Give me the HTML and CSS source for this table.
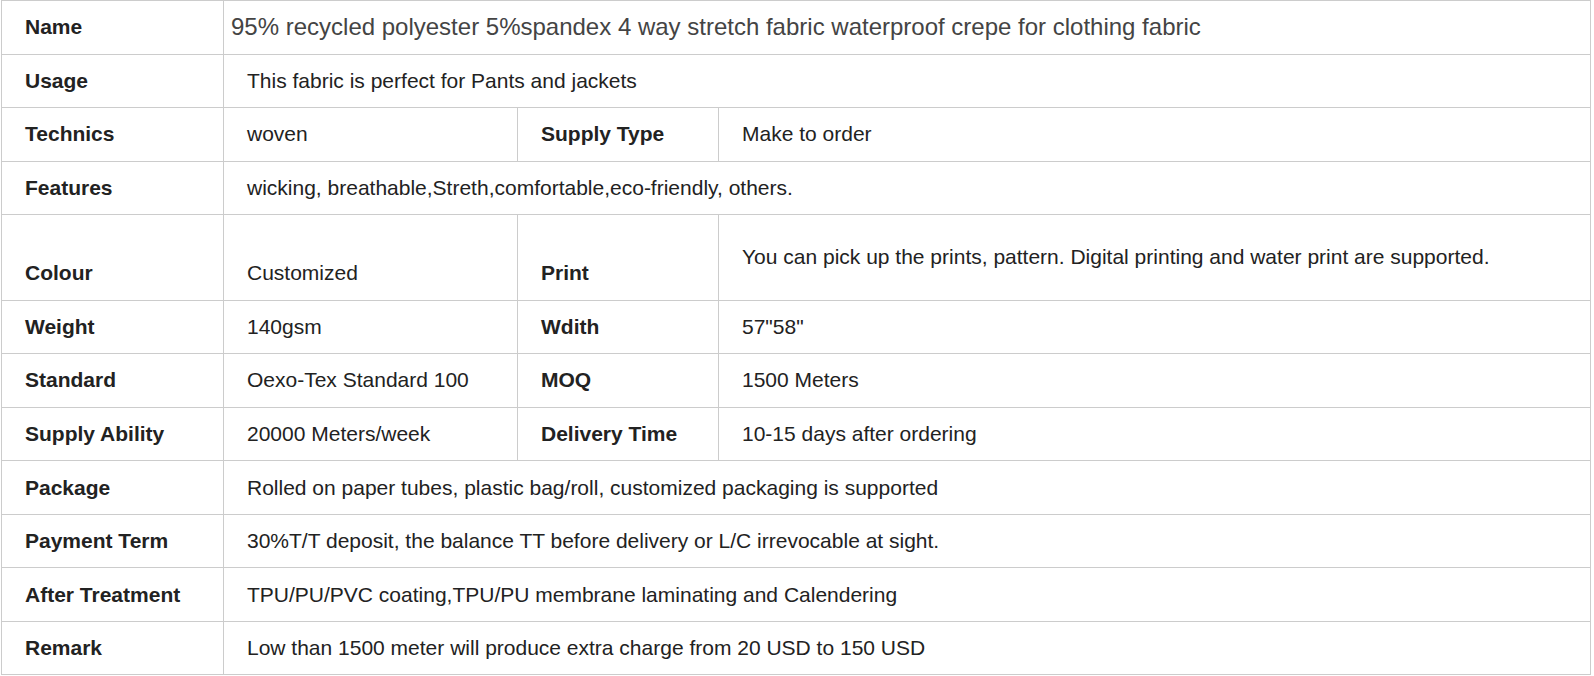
FILE: index.html
```html
<!DOCTYPE html>
<html>
<head>
<meta charset="utf-8">
<link rel="stylesheet" href="styles.css">
</head>
<body>
<div class="wrap">
<table class="spec">
  <colgroup>
    <col class="c1"><col class="c2"><col class="c3"><col class="c4">
  </colgroup>
  <tbody>
    <tr><td class="lbl">Name</td><td class="val name" colspan="3">95% recycled polyester 5%spandex 4 way stretch fabric waterproof crepe for clothing fabric</td></tr>
    <tr><td class="lbl">Usage</td><td class="val" colspan="3">This fabric is perfect for Pants and jackets</td></tr>
    <tr><td class="lbl">Technics</td><td class="val">woven</td><td class="lbl">Supply Type</td><td class="val">Make to order</td></tr>
    <tr><td class="lbl">Features</td><td class="val" colspan="3">wicking, breathable,Streth,comfortable,eco-friendly, others.</td></tr>
    <tr class="tall"><td class="lbl bottom">Colour</td><td class="val bottom">Customized</td><td class="lbl bottom">Print</td><td class="val"><p class="para">You can pick up the prints, pattern. Digital printing and water print are supported.</p></td></tr>
    <tr><td class="lbl">Weight</td><td class="val">140gsm</td><td class="lbl">Wdith</td><td class="val">57"58"</td></tr>
    <tr><td class="lbl">Standard</td><td class="val">Oexo-Tex Standard 100</td><td class="lbl">MOQ</td><td class="val">1500 Meters</td></tr>
    <tr><td class="lbl">Supply Ability</td><td class="val">20000 Meters/week</td><td class="lbl">Delivery Time</td><td class="val">10-15 days after ordering</td></tr>
    <tr><td class="lbl">Package</td><td class="val" colspan="3">Rolled on paper tubes, plastic bag/roll, customized packaging is supported</td></tr>
    <tr><td class="lbl">Payment Term</td><td class="val" colspan="3">30%T/T deposit, the balance TT before delivery or L/C irrevocable at sight.</td></tr>
    <tr><td class="lbl">After Treatment</td><td class="val" colspan="3">TPU/PU/PVC coating,TPU/PU membrane laminating and Calendering</td></tr>
    <tr><td class="lbl">Remark</td><td class="val" colspan="3">Low than 1500 meter will produce extra charge from 20 USD to 150 USD</td></tr>
  </tbody>
</table>
</div>
</body>
</html>
```

FILE: styles.css
```css
html, body {
  margin: 0;
  padding: 0;
  background: #fff;
}
.wrap {
  padding: 0 3px 0 1px;
}
.spec {
  width: 1590px;
  border-collapse: collapse;
  table-layout: fixed;
  font-family: "Liberation Sans", Arial, sans-serif;
  font-size: 21px;
  line-height: 30px;
  color: #222;
}
.c1 { width: 222px; }
.c2 { width: 294px; }
.c3 { width: 201px; }
.c4 { width: auto; }
.spec td {
  border: 1px solid #cccccc;
  padding: 11.27px 22px;
  vertical-align: middle;
}
.spec td.lbl {
  font-weight: bold;
  padding-left: 23px;
}
.spec td.val {
  padding-left: 23px;
}
.spec td.name {
  font-size: 24px;
  color: #444;
  padding-left: 7px;
}
.spec td.bottom {
  vertical-align: bottom;
}
.para {
  margin: 16px 0;
}
```
